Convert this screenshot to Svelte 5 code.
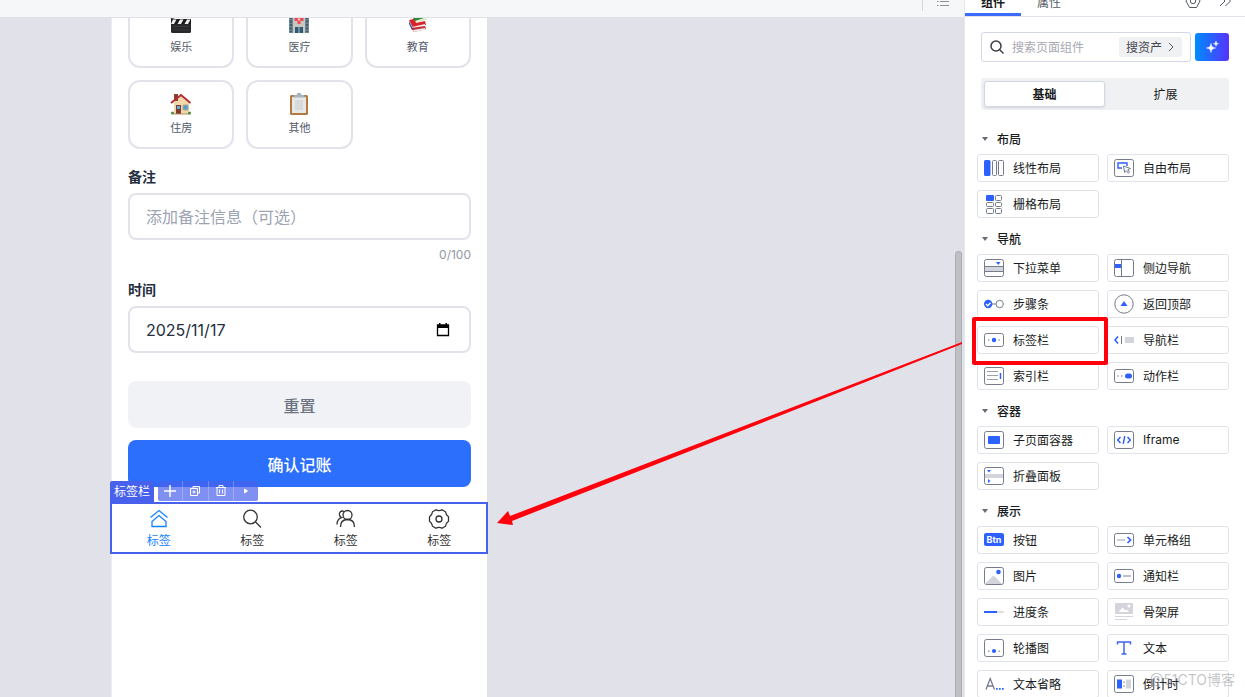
<script lang="ts">
  // Page preview data
  const categories = [
    { name: '娱乐', icon: 'movie' },
    { name: '医疗', icon: 'hospital' },
    { name: '教育', icon: 'books' },
    { name: '住房', icon: 'house' },
    { name: '其他', icon: 'clipboard' },
  ];

  const tabs = ['home', 'search', 'friends', 'setting'];

  let note = $state('');
  let date = $state('2025/11/17');
  let keyword = $state('');
  let activeTab = $state(0);
  let library = $state('基础');

  // Component library, grouped as in the side panel
  const groups = [
    {
      title: '布局',
      items: [
        { name: '线性布局', icon: 'linear' },
        { name: '自由布局', icon: 'free' },
        { name: '栅格布局', icon: 'grid' },
      ],
    },
    {
      title: '导航',
      items: [
        { name: '下拉菜单', icon: 'dropdown' },
        { name: '侧边导航', icon: 'sidebar' },
        { name: '步骤条', icon: 'steps' },
        { name: '返回顶部', icon: 'backtop' },
        { name: '标签栏', icon: 'tabbar', marked: true },
        { name: '导航栏', icon: 'navbar' },
        { name: '索引栏', icon: 'indexbar' },
        { name: '动作栏', icon: 'actionbar' },
      ],
    },
    {
      title: '容器',
      items: [
        { name: '子页面容器', icon: 'subpage' },
        { name: 'Iframe', icon: 'iframe' },
        { name: '折叠面板', icon: 'collapse' },
      ],
    },
    {
      title: '展示',
      items: [
        { name: '按钮', icon: 'button' },
        { name: '单元格组', icon: 'cells' },
        { name: '图片', icon: 'image' },
        { name: '通知栏', icon: 'notice' },
        { name: '进度条', icon: 'progress' },
        { name: '骨架屏', icon: 'skeleton' },
        { name: '轮播图', icon: 'swiper' },
        { name: '文本', icon: 'text' },
        { name: '文本省略', icon: 'ellipsis' },
        { name: '倒计时', icon: 'countdown' },
      ],
    },
  ];

  const box = '<rect x=".5" y="1.5" width="19" height="17" rx="2" fill="#fff" stroke="#747c8d"/>';
  const flatBox = '<rect x=".5" y="3.5" width="19" height="13" rx="2" fill="#fff" stroke="#747c8d"/>';

  const icons: Record<string, string> = {
    linear: '<rect x="0" y="2" width="6.500" height="16" rx="1.5" fill="#2c60ff"/><rect x="8.500" y="2.5" width="4" height="15" rx="1" fill="none" stroke="#747c8d"/><rect x="14.5" y="2.5" width="5" height="15" rx="1" fill="none" stroke="#747c8d"/>',
    free: box + '<path d="M8 10H4V5h9v3" fill="none" stroke="#2c60ff" stroke-width="1.4"/><path d="M9.5 8l7 2.5-2.7 1.2 1.7 2.4-1.3 1-1.7-2.4-1.8 1.8z" fill="#fff" stroke="#747c8d"/>',
    grid: '<rect x="2" y="1" width="8" height="6" rx="1" fill="#2c60ff"/><g fill="none" stroke="#747c8d"><rect x="11.5" y="1.5" width="6" height="5" rx="1"/><rect x="2.5" y="8.500" width="7" height="4" rx="1"/><rect x="11.500" y="8.500" width="6" height="4" rx="1"/><rect x="2.500" y="14.500" width="7" height="5" rx="1"/><rect x="11.500" y="14.500" width="6" height="5" rx="1"/></g>',
    dropdown: box + '<path d="M1 8.500h18M1 13.500h18" stroke="#747c8d"/><path d="M1 9h18v4H1z" fill="#d4d5dc"/><path d="M12 4h4.500l-2.200 3z" fill="#2c60ff"/>',
    sidebar: box + '<path d="M7.500 2v16" stroke="#747c8d"/><path d="M1 6h6v4H1z" fill="#2c60ff"/>',
    steps: '<path d="M8 10h4" stroke="#747c8d"/><circle cx="4.200" cy="10" r="4.200" fill="#2c60ff"/><path d="M2 10l1.700 1.700 2.900-3" fill="none" stroke="#fff" stroke-width="1.300"/><circle cx="15.700" cy="10" r="3.700" fill="#fff" stroke="#747c8d"/>',
    backtop: '<circle cx="10" cy="10" r="9.200" fill="#fff" stroke="#747c8d"/><path d="M10 7l3.500 5h-7z" fill="#2c60ff"/>',
    tabbar: flatBox + '<circle cx="10" cy="10" r="2.200" fill="#2c60ff"/><path d="M4 9.300h1.500v1.500H4zM14.500 9.300H16v1.500h-1.500z" fill="#9aa1ae"/>',
    navbar: '<path d="M4 6.500L1 10l3 3.500" fill="none" stroke="#2c60ff" stroke-width="1.600"/><path d="M7.500 6v8" stroke="#747c8d"/><path d="M11 7h9v6h-9z" fill="#d4d5dc"/>',
    indexbar: box + '<path d="M3 5.500h11M3 9.500h11M3 13.500h11" stroke="#9aa1ae"/><path d="M16.500 7v6" stroke="#2c60ff" stroke-width="1.500"/>',
    actionbar: flatBox + '<rect x="11" y="7.500" width="7" height="5" rx="2.500" fill="#2c60ff"/><path d="M3 9.300h1.500v1.500H3zM7 9.300h1.500v1.500H7z" fill="#9aa1ae"/>',
    subpage: box + '<rect x="4" y="6" width="12" height="8" rx="1" fill="#2c60ff"/>',
    iframe: box + '<path d="M6.500 7L3.700 10l2.800 3M13.500 7l2.800 3-2.800 3M10.800 6.200l-1.600 7.600" fill="none" stroke="#2c60ff" stroke-width="1.500"/>',
    collapse: box + '<path d="M1 8h18v4H1z" fill="#d4d5dc"/><path d="M3 4h4L5 6.500zM4 13l2.500 2L4 17z" fill="#2c60ff"/>',
    button: '<rect x="0" y="3" width="20" height="13" rx="2" fill="#2c60ff"/><text x="10" y="13" text-anchor="middle" font-size="9" font-weight="700" fill="#fff">Btn</text>',
    cells: flatBox + '<path d="M3 10h8" stroke="#9aa1ae"/><path d="M13.500 7l3 3-3 3" fill="none" stroke="#2c60ff" stroke-width="1.700"/>',
    image: box + '<path d="M1 17.500L9.500 9.500l9 8.500H1.500z" fill="#d4d5dc"/><circle cx="14.500" cy="6" r="2.300" fill="#2c60ff"/>',
    notice: flatBox + '<circle cx="5" cy="10" r="2.200" fill="#2c60ff"/><path d="M9 10h8" stroke="#747c8d"/>',
    progress: '<path d="M13 10h7" stroke="#d4d5dc" stroke-width="1.500"/><path d="M0 10h13" stroke="#2c60ff" stroke-width="2"/>',
    skeleton: '<rect x="1" y="1" width="18" height="11" rx="1" fill="#d4d5dc"/><path d="M4.500 10l4-4.500 3 3 1.500-1 2 2.500z" fill="#fff"/><circle cx="15" cy="4" r="1.500" fill="#fff"/><path d="M1 14.500h18M1 17.500h12" stroke="#d4d5dc"/>',
    swiper: box + '<circle cx="10" cy="13" r="2.100" fill="#2c60ff"/><path d="M4 12.500h1.500V14H4zM14.500 12.500H16V14h-1.500z" fill="#9aa1ae"/>',
    text: '<path d="M3.500 6.500V4h13v2.500M10 4v12M7.500 16h5" fill="none" stroke="#3c66f5" stroke-width="1.500"/>',
    ellipsis: '<path d="M2 15.500L6.200 4.500l4.200 11M3.500 12h5.500" fill="none" stroke="#747c8d" stroke-width="1.300"/><path d="M12 14h1.700v1.700H12zM15 14h1.700v1.700H15zM18 14h1.700v1.700H18z" fill="#2c60ff"/>',
    countdown: box + '<path d="M3 5.500h5v9H3z" fill="#2c60ff"/><path d="M12 5.500h5v9h-5z" fill="#d4d5dc"/><path d="M9.300 7.500h1.400V9H9.300zM9.300 11.500h1.400V13H9.300z" fill="#9aa1ae"/>',

    home: '<path d="M2.500 9.500L11 2.500l8.500 7M4 18.500v-5l7-6 7 6v5z"/>',
    search: '<circle cx="9.500" cy="9" r="6.800"/><path d="M14.500 14l5.500 5.500"/>',
    friends: '<circle cx="12.500" cy="7" r="4.500"/><path d="M5.500 19c0-4.500 2.500-7.500 7-7.500s7 3 7 7.500M9 3.500C6 2 3.800 4.500 4.500 7c.3 1.500 1.200 2.300 2 2.600C3.500 10.500 2 13 2 16.500"/>',
    setting: '<circle cx="11" cy="11" r="3"/><path d="M8 1.800c2 1 4 1 6 0l3.500 2c.2 2.200 1.200 3.800 3 5v4.400c-1.800 1.200-2.800 2.800-3 5l-3.500 2c-2-1-4-1-6 0l-3.500-2c-.2-2.200-1.200-3.800-3-5V8.800c1.800-1.200 2.800-2.800 3-5z"/>',

    movie: '<rect x="2" y="10" width="20" height="12" rx="1.500" fill="#29282b"/><path d="M2 8h20v5H2z" fill="#1b1b1d"/><path d="M4 8.500h3.500L5 13H2zM11 8.500h3.500L12 13H8.500zM18 8.500h3.500L19 13h-3.500z" fill="#f1f1f1"/><path d="M1 3.500L20 0l1 4L2 8z" fill="#29282b"/><path d="M2.500 4l3.500-.7 2.500 3.200-3.500.8zM10 2.300l3.500-.7L16 5l-3.500.8z" fill="#fff"/><path d="M4 15.500h16M4 19h16" stroke="#3a393d"/>',
    hospital: '<path d="M2 4h20v18H2z" fill="#6e8595"/><path d="M6 1h12v21H6z" fill="#c8c6bd"/><path d="M10.500 4h3v3h3v3h-3v3h-3v-3h-3V7h3z" fill="#ef4b58"/><path d="M11.200 7.500h1.600v2h-1.600z" fill="#fff"/><path d="M8 16h8v6H8z" fill="#315a74"/><path d="M12 16v6" stroke="#a9c1cd"/><path d="M4 6v15M20 6v15" stroke="#314f64" stroke-width="1.500" stroke-dasharray="2 1.500"/>',
    books: '<path d="M5 2l12-2 4 8-12 4z" fill="#2a8c34"/><path d="M9 10l12-4v2L10 12z" fill="#e8f3dc"/><path d="M3 9l5-1 2 4 9-2 1 4-13 3z" fill="#d82328"/><path d="M6 16l13-3v2L7 18z" fill="#eee"/><path d="M5 17l14-2 1 3-12 3z" fill="#c22b35"/><path d="M7 19l12-2v1.500L8 21z" fill="#eee"/><path d="M3 10l4 8-1 1-3-6z" fill="#384c9a"/>',
    house: '<path d="M5 10l7-6 8 7v11H5z" fill="#f1d8aa"/><path d="M5 2h4v7H5z" fill="#8a3f32"/><path d="M2 11L12 3l9.500 8" fill="none" stroke="#b42d32" stroke-width="2"/><path d="M7 13h5v9H7z" fill="#7f3a2b"/><path d="M8 14h3v3H8z" fill="#59aee2"/><path d="M14 13h5v5h-5z" fill="#4f9fd5" stroke="#b8aa87"/><path d="M4.500 22h16" stroke="#b18c6e"/><circle cx="3.500" cy="21" r="1.500" fill="#4a8d31"/><circle cx="20.500" cy="21" r="1.500" fill="#4a8d31"/>',
    clipboard: '<rect x="3" y="3" width="18" height="20" rx="1.500" fill="#b27a3e"/><path d="M5 5h14v16H5z" fill="#e6e7e8"/><path d="M8 9h8M8 11h8M8 13h8M8 15h8M8 17h8" stroke="#c8cace"/><path d="M7 3h2.500C10 0 14 0 14.500 3H17l1 2.500H6z" fill="#a8b4bd"/>',
  };
</script>

<main class="editor">
  <section class="workspace">
    <header class="topbar">
      <span class="divider"></span>
      <svg width="14" height="14" viewBox="0 0 14 14" fill="none" stroke="#8d9099">
        <path d="M4 4.500h9M4 8.500h9M4 12.500h9M1 4.500h1.500M1 8.500h1.500M1 12.500h1.500" />
      </svg>
    </header>

    <div class="stage">
      <div class="phone">
        <div class="categories">
          {#each categories as category}
            <button type="button" class="category">
              <svg width="24" height="24" viewBox="0 0 24 24">{@html icons[category.icon]}</svg>
              <span>{category.name}</span>
            </button>
          {/each}
        </div>

        <label class="label" for="note">备注</label>
        <input id="note" class="field" maxlength="100" placeholder="添加备注信息（可选）" bind:value={note} />
        <div class="counter">{note.length}/100</div>

        <label class="label" for="date">时间</label>
        <div class="field date-field">
          <input id="date" bind:value={date} />
          <svg width="16" height="16" viewBox="0 0 16 16">
            <path d="M2.500 3h11v10.500h-11z" fill="none" stroke="#000" stroke-width="1.300" />
            <path d="M2 3h12v3H2zM4 1h1.500v2H4zM10.500 1H12v2h-1.500z" />
          </svg>
        </div>

        <div class="actions">
          <button type="button" class="action">重置</button>
          <button type="button" class="action primary">确认记账</button>
        </div>

        <nav class="tabbar">
          <span class="selected-name">标签栏</span>
          <div class="tools">
            <button type="button" aria-label="添加">
              <svg width="14" height="14" viewBox="0 0 14 14"><path d="M7 1v12M1 7h12" stroke-width="1.500" /></svg>
            </button>
            <button type="button" aria-label="复制">
              <svg width="14" height="14" viewBox="0 0 14 14"><path d="M2.500 4.500h7v7h-7zM5 4V2.500h6.500V9H10M6 6.500v3M4.500 8h3" /></svg>
            </button>
            <button type="button" aria-label="删除">
              <svg width="14" height="14" viewBox="0 0 14 14"><path d="M2 3.500h10M5 3V1.500h4V3M3 4v7.500h8V4M5.500 5.500v4M8.500 5.500v4" /></svg>
            </button>
            <button type="button" aria-label="更多">
              <svg width="14" height="14" viewBox="0 0 14 14"><path d="M5.500 5L8.500 7l-3 2z" fill="#fff" /></svg>
            </button>
          </div>
          {#each tabs as tab, i}
            <button type="button" class="tab" class:active={activeTab === i} onclick={() => (activeTab = i)}>
              <svg width="22" height="22" viewBox="0 0 22 22">{@html icons[tab]}</svg>
              <span>标签</span>
            </button>
          {/each}
        </nav>
      </div>
      <div class="scroll-thumb"></div>
    </div>

    <!-- arrow from the library item to the placed component -->
    <svg class="arrow" width="466" height="184" viewBox="0 0 466 184">
      <path d="M0 181L11 169l2 5L465 0v2L15 179l1 4z" fill="#ff000c" />
    </svg>
  </section>

  <aside class="panel">
    <header class="panel-tabs">
      <button type="button" class="panel-tab current">组件</button>
      <button type="button" class="panel-tab">属性</button>
      <div class="panel-icons">
        <svg width="16" height="16" viewBox="0 0 16 16" fill="none" stroke="#555963">
          <path d="M4.500 1.500h7L15 8l-3.500 6.500h-7L1 8z" /><circle cx="8" cy="8" r="2.700" />
        </svg>
        <svg width="16" height="16" viewBox="0 0 16 16" fill="none" stroke="#555963">
          <path d="M3 3l5 5-5 5M8.500 3l5 5-5 5" />
        </svg>
      </div>
    </header>

    <div class="search-row">
      <div class="search">
        <svg width="16" height="16" viewBox="0 0 16 16" fill="none" stroke="#3b3e45" stroke-width="1.500">
          <circle cx="7" cy="7" r="5" /><path d="M10.500 10.500l4 4" />
        </svg>
        <input aria-label="搜索页面组件" placeholder="搜索页面组件" bind:value={keyword} />
        <button type="button" class="assets">
          <span>搜资产</span>
          <svg width="10" height="10" viewBox="0 0 10 10" fill="none" stroke="#555963"><path d="M3 1l4 4-4 4" /></svg>
        </button>
      </div>
      <button type="button" class="ai" aria-label="AI">
        <svg width="16" height="16" viewBox="0 0 16 16" fill="#fff">
          <path d="M7 4.500C7.700 7.700 8.300 8.300 11.500 9c-3.200.7-3.800 1.300-4.500 4.500C6.300 10.300 5.700 9.700 2.500 9c3.200-.7 3.800-1.300 4.500-4.500zM12 2c.3 2 .7 2.300 2.500 2.700-1.800.4-2.200.8-2.500 2.600-.3-1.800-.7-2.200-2.500-2.600C11.300 4.300 11.700 4 12 2z" stroke="#fff" stroke-width=".5" />
        </svg>
      </button>
    </div>

    <div class="segment">
      {#each ['基础', '扩展'] as name}
        <button type="button" class:on={library === name} onclick={() => (library = name)}>{name}</button>
      {/each}
    </div>

    {#each groups as group}
      <h3 class="group-title">
        <svg width="8" height="8" viewBox="0 0 8 8"><path d="M1 2h6L4 6z" fill="#666a73" /></svg>
        <span>{group.title}</span>
      </h3>
      <div class="items">
        {#each group.items as item}
          <button type="button" class="item" class:marked={item.marked}>
            <svg width="20" height="20" viewBox="0 0 20 20">{@html icons[item.icon]}</svg>
            <span>{item.name}</span>
          </button>
        {/each}
      </div>
    {/each}
  </aside>

  <span class="watermark">@51CTO博客</span>
</main>

<style>
  :global(body) {
    margin: 0;
  }

  .editor {
    position: relative;
    display: flex;
    height: 100vh;
    overflow: hidden;
    font-family: Inter, 'Noto Sans CJK SC', sans-serif;
    font-size: 12px;
    color: #191b21;
    background: #fff;
  }

  .editor * {
    box-sizing: border-box;
  }

  button,
  input {
    margin: 0;
    padding: 0;
    border: 0;
    background: none;
    font: inherit;
    color: inherit;
    outline: none;
  }

  button {
    cursor: pointer;
  }

  svg {
    flex: none;
    display: block;
  }

  /* Workspace */
  .workspace {
    position: relative;
    flex: 1;
    min-width: 0;
    display: flex;
    flex-direction: column;
    background: #e1e1e9;
  }

  .topbar {
    flex: none;
    display: flex;
    justify-content: flex-end;
    gap: 13px;
    height: 18px;
    padding-right: 14px;
    overflow: hidden;
    background: #f6f7f9;
    border-bottom: 1px solid #e0e1e8;
  }

  .topbar svg {
    margin-top: -7px;
  }

  .divider {
    width: 1px;
    height: 11px;
    background: #d5d7df;
  }

  .stage {
    flex: 1;
    min-height: 0;
    display: flex;
    justify-content: space-between;
    overflow: hidden;
  }

  .phone {
    display: flex;
    flex-direction: column;
    width: 376px;
    margin-left: 111px;
    padding: 0 16px;
    background: #fff;
    border-left: 1px solid #ececf2;
  }

  /* scrolled so that the first row is cut by the top bar */
  .categories {
    display: grid;
    grid-template-columns: repeat(3, 1fr);
    gap: 12px;
    margin-top: -19px;
  }

  .category {
    display: flex;
    flex-direction: column;
    align-items: center;
    justify-content: center;
    gap: 3px;
    height: 69px;
    border: 2px solid #e2e3ea;
    border-radius: 12px;
    font-size: 11px;
    line-height: 18px;
    color: #535b6c;
  }

  .label {
    margin-top: 18px;
    font-size: 14px;
    font-weight: 600;
    line-height: 20px;
    color: #252f40;
  }

  .field {
    width: 100%;
    height: 47px;
    margin-top: 6px;
    padding: 0 16px;
    border: 2px solid #e2e3ea;
    border-radius: 8px;
    font-size: 16px;
    color: #252f40;
  }

  .field::placeholder {
    color: #9ca3b2;
    opacity: 1;
  }

  .counter {
    margin-top: 6px;
    font-size: 12px;
    line-height: 18px;
    text-align: right;
    color: #9097a6;
  }

  .counter + .label {
    margin-top: 16px;
  }

  .date-field {
    display: flex;
    align-items: center;
    padding-right: 18px;
  }

  .date-field input {
    flex: 1;
    min-width: 0;
  }

  .actions {
    display: flex;
    flex-direction: column;
    gap: 12px;
    margin-top: 28px;
  }

  .action {
    height: 47px;
    border-radius: 8px;
    font-size: 16px;
    font-weight: 500;
    color: #6b7280;
    background: #f1f2f6;
  }

  .action.primary {
    color: #fff;
    background: #2b6ffc;
  }

  .tabbar {
    position: relative;
    display: flex;
    height: 52px;
    margin: 15px -17px 0 -18px;
    border: 2px solid #4861ec;
    background: #fff;
  }

  .selected-name {
    position: absolute;
    left: -2px;
    bottom: 100%;
    margin-bottom: 1px;
    padding: 0 4px;
    line-height: 22px;
    color: #fff;
    background: #4861ec;
    border-radius: 2px 2px 0 0;
  }

  .tools {
    position: absolute;
    left: 46px;
    bottom: 100%;
    display: flex;
    width: 100px;
    height: 20px;
    margin-bottom: 3px;
    border-radius: 2px;
    background: rgba(72, 97, 236, 0.7);
  }

  .tools button {
    flex: 1;
    display: grid;
    place-items: center;
  }

  .tools button + button {
    border-left: 1px solid rgba(255, 255, 255, 0.25);
  }

  .tools svg {
    fill: none;
    stroke: #fff;
  }

  .tab {
    flex: 1;
    display: flex;
    flex-direction: column;
    align-items: center;
    padding-top: 4px;
    line-height: 21px;
    color: #323233;
  }

  .tab svg {
    fill: none;
    stroke: currentColor;
    stroke-width: 1.3;
  }

  .tab.active {
    color: #1582ff;
  }

  .scroll-thumb {
    width: 7px;
    margin: 233px 2px 0 0;
    border: 1px solid #adaeb3;
    border-bottom: 0;
    border-radius: 4px 4px 0 0;
    background: #bfc0c4;
  }

  .arrow {
    position: absolute;
    left: 497px;
    top: 342px;
  }

  /* Component panel */
  .panel {
    flex: none;
    width: 281px;
    padding-bottom: 16px;
    overflow: hidden;
    background: #fff;
    border-left: 1px solid #e6e7ed;
  }

  .panel-tabs {
    display: flex;
    align-items: flex-end;
    height: 17px;
    overflow: hidden;
    border-bottom: 1px solid #e2e3ea;
  }

  .panel-tab {
    width: 56px;
    height: 24px;
    line-height: 20px;
    padding-bottom: 3px;
    color: #555963;
  }

  .panel-tab.current {
    font-weight: 700;
    color: #191b21;
    border-bottom: 3px solid #3c6cff;
    padding-bottom: 0;
  }

  .panel-icons {
    display: flex;
    gap: 16px;
    margin: 0 12px 7px auto;
  }

  .search-row {
    display: flex;
    align-items: center;
    gap: 4px;
    margin: 15px 16px 0;
  }

  .search {
    flex: 1;
    min-width: 0;
    display: flex;
    align-items: center;
    gap: 7px;
    height: 30px;
    padding: 0 8px 0 7px;
    border: 1px solid #d3d7e6;
    border-radius: 3px;
  }

  .search input {
    flex: 1;
    min-width: 0;
  }

  .search input::placeholder {
    color: #a6a9b2;
    opacity: 1;
  }

  .assets {
    display: flex;
    align-items: center;
    gap: 4px;
    height: 20px;
    padding: 0 6px 0 7px;
    border-radius: 3px;
    color: #44474f;
    background: #f0f1f3;
  }

  .ai {
    display: grid;
    place-items: center;
    width: 34px;
    height: 28px;
    border-radius: 3px;
    background: linear-gradient(90deg, #008cff, #5633ff);
  }

  .segment {
    display: flex;
    height: 32px;
    margin: 16px 16px 8px;
    padding: 3px;
    border-radius: 3px;
    background: #f0f1f3;
  }

  .segment button {
    flex: 1;
    padding-bottom: 2px;
    border: 1px solid transparent;
    border-radius: 3px;
  }

  .segment .on {
    font-weight: 600;
    background: #fff;
    border-color: #d3d7e6;
    box-shadow: 0 1px 2px rgba(60, 70, 110, 0.15);
  }

  .group-title {
    display: flex;
    align-items: center;
    gap: 8px;
    height: 36px;
    margin: 0;
    padding: 6px 16px 0;
    font-size: 12px;
    font-weight: 500;
  }

  .items {
    display: grid;
    grid-template-columns: 1fr 1fr;
    gap: 8px;
    padding: 0 16px 0 12px;
  }

  .item {
    display: flex;
    align-items: center;
    gap: 9px;
    height: 28px;
    padding: 0 6px;
    border: 1px solid #e2e3ea;
    border-radius: 3px;
    white-space: nowrap;
  }

  /* CJK glyphs sit low in their line box, so labels get a little room below */
  .item span,
  .assets span,
  .group-title span {
    padding-bottom: 2px;
  }

  .marked {
    position: relative;
  }

  .marked::after {
    content: '';
    position: absolute;
    z-index: 1;
    inset: -10px -10px -12px -6px;
    border: 4px solid #ff000c;
    border-radius: 2px;
  }

  .watermark {
    position: absolute;
    right: 10px;
    bottom: 7px;
    font-size: 14px;
    line-height: 20px;
    color: rgba(120, 122, 130, 0.45);
    pointer-events: none;
  }
</style>
